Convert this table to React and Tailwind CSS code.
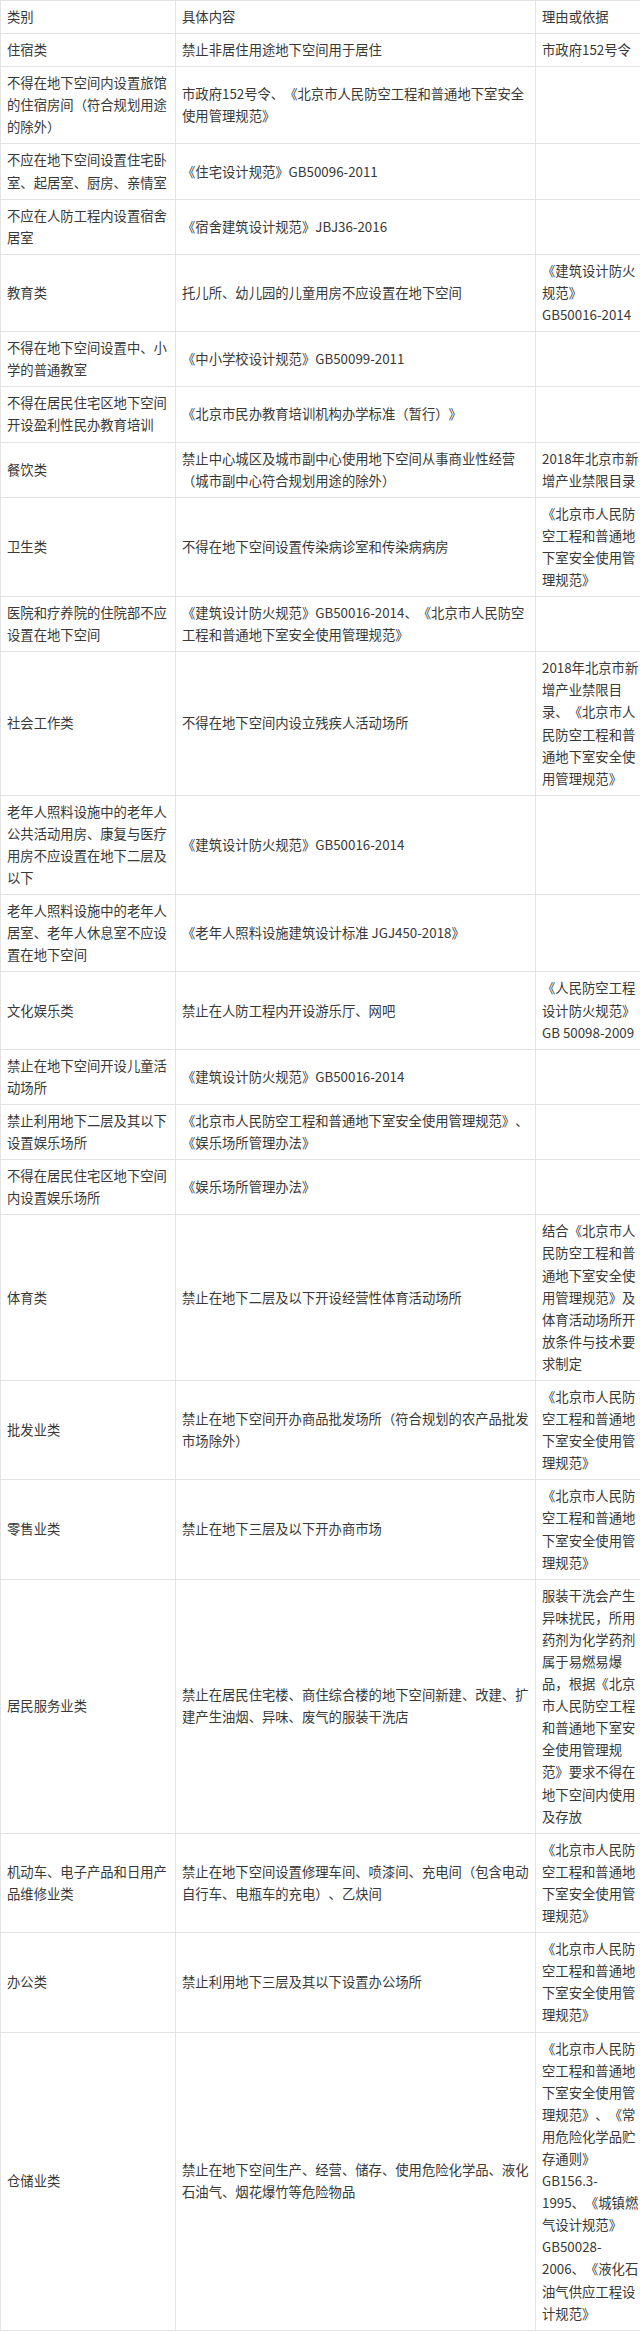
import React from "react";

const rows = [
  [["类别"], ["具体内容"], ["理由或依据"]],
  [["住宿类"], ["禁止非居住用途地下空间用于居住"], ["市政府152号令"]],
  [
    ["不得在地下空间内设置旅馆", "的住宿房间（符合规划用途", "的除外）"],
    ["市政府152号令、《北京市人民防空工程和普通地下室安全", "使用管理规范》"],
    [],
  ],
  [["不应在地下空间设置住宅卧", "室、起居室、厨房、亲情室"], ["《住宅设计规范》GB50096-2011"], []],
  [["不应在人防工程内设置宿舍", "居室"], ["《宿舍建筑设计规范》JBJ36-2016"], []],
  [["教育类"], ["托儿所、幼儿园的儿童用房不应设置在地下空间"], ["《建筑设计防火", "规范》", "GB50016-2014"]],
  [["不得在地下空间设置中、小", "学的普通教室"], ["《中小学校设计规范》GB50099-2011"], []],
  [["不得在居民住宅区地下空间", "开设盈利性民办教育培训"], ["《北京市民办教育培训机构办学标准（暂行）》"], []],
  [
    ["餐饮类"],
    ["禁止中心城区及城市副中心使用地下空间从事商业性经营", "（城市副中心符合规划用途的除外）"],
    ["2018年北京市新", "增产业禁限目录"],
  ],
  [["卫生类"], ["不得在地下空间设置传染病诊室和传染病病房"], ["《北京市人民防", "空工程和普通地", "下室安全使用管", "理规范》"]],
  [
    ["医院和疗养院的住院部不应", "设置在地下空间"],
    ["《建筑设计防火规范》GB50016-2014、《北京市人民防空", "工程和普通地下室安全使用管理规范》"],
    [],
  ],
  [
    ["社会工作类"],
    ["不得在地下空间内设立残疾人活动场所"],
    ["2018年北京市新", "增产业禁限目", "录、《北京市人", "民防空工程和普", "通地下室安全使", "用管理规范》"],
  ],
  [
    ["老年人照料设施中的老年人", "公共活动用房、康复与医疗", "用房不应设置在地下二层及", "以下"],
    ["《建筑设计防火规范》GB50016-2014"],
    [],
  ],
  [
    ["老年人照料设施中的老年人", "居室、老年人休息室不应设", "置在地下空间"],
    ["《老年人照料设施建筑设计标准 JGJ450-2018》"],
    [],
  ],
  [["文化娱乐类"], ["禁止在人防工程内开设游乐厅、网吧"], ["《人民防空工程", "设计防火规范》", "GB 50098-2009"]],
  [["禁止在地下空间开设儿童活", "动场所"], ["《建筑设计防火规范》GB50016-2014"], []],
  [
    ["禁止利用地下二层及其以下", "设置娱乐场所"],
    ["《北京市人民防空工程和普通地下室安全使用管理规范》、", "《娱乐场所管理办法》"],
    [],
  ],
  [["不得在居民住宅区地下空间", "内设置娱乐场所"], ["《娱乐场所管理办法》"], []],
  [
    ["体育类"],
    ["禁止在地下二层及以下开设经营性体育活动场所"],
    ["结合《北京市人", "民防空工程和普", "通地下室安全使", "用管理规范》及", "体育活动场所开", "放条件与技术要", "求制定"],
  ],
  [
    ["批发业类"],
    ["禁止在地下空间开办商品批发场所（符合规划的农产品批发", "市场除外）"],
    ["《北京市人民防", "空工程和普通地", "下室安全使用管", "理规范》"],
  ],
  [["零售业类"], ["禁止在地下三层及以下开办商市场"], ["《北京市人民防", "空工程和普通地", "下室安全使用管", "理规范》"]],
  [
    ["居民服务业类"],
    ["禁止在居民住宅楼、商住综合楼的地下空间新建、改建、扩", "建产生油烟、异味、废气的服装干洗店"],
    [
      "服装干洗会产生",
      "异味扰民，所用",
      "药剂为化学药剂",
      "属于易燃易爆",
      "品，根据《北京",
      "市人民防空工程",
      "和普通地下室安",
      "全使用管理规",
      "范》要求不得在",
      "地下空间内使用",
      "及存放",
    ],
  ],
  [
    ["机动车、电子产品和日用产", "品维修业类"],
    ["禁止在地下空间设置修理车间、喷漆间、充电间（包含电动", "自行车、电瓶车的充电）、乙炔间"],
    ["《北京市人民防", "空工程和普通地", "下室安全使用管", "理规范》"],
  ],
  [["办公类"], ["禁止利用地下三层及其以下设置办公场所"], ["《北京市人民防", "空工程和普通地", "下室安全使用管", "理规范》"]],
  [
    ["仓储业类"],
    ["禁止在地下空间生产、经营、储存、使用危险化学品、液化", "石油气、烟花爆竹等危险物品"],
    [
      "《北京市人民防",
      "空工程和普通地",
      "下室安全使用管",
      "理规范》、《常",
      "用危险化学品贮",
      "存通则》",
      "GB156.3-",
      "1995、《城镇燃",
      "气设计规范》",
      "GB50028-",
      "2006、《液化石",
      "油气供应工程设",
      "计规范》",
    ],
  ],
];

function Cell({ lines }) {
  return (
    <td className="border border-[#e3e3e3] pl-[6px] pr-[4px] py-[5px] align-middle">
      {lines.map((l, i) => (
        <div key={i} className="whitespace-nowrap">
          {l}
        </div>
      ))}
    </td>
  );
}

export default function App() {
  return (
    <div className="w-[640px] h-[2332px] overflow-hidden bg-white">
      <table className="w-[650px] table-fixed border-collapse font-['Noto_Sans_CJK_SC',sans-serif] text-[13.33px] leading-[22.1px] text-[#383838] [text-spacing-trim:space-all]">
        <colgroup>
          <col className="w-[175px]" />
          <col className="w-[360px]" />
          <col className="w-[115px]" />
        </colgroup>
        <tbody>
          {rows.map((r, i) => (
            <tr key={i}>
              <Cell lines={r[0]} />
              <Cell lines={r[1]} />
              <Cell lines={r[2]} />
            </tr>
          ))}
        </tbody>
      </table>
    </div>
  );
}
